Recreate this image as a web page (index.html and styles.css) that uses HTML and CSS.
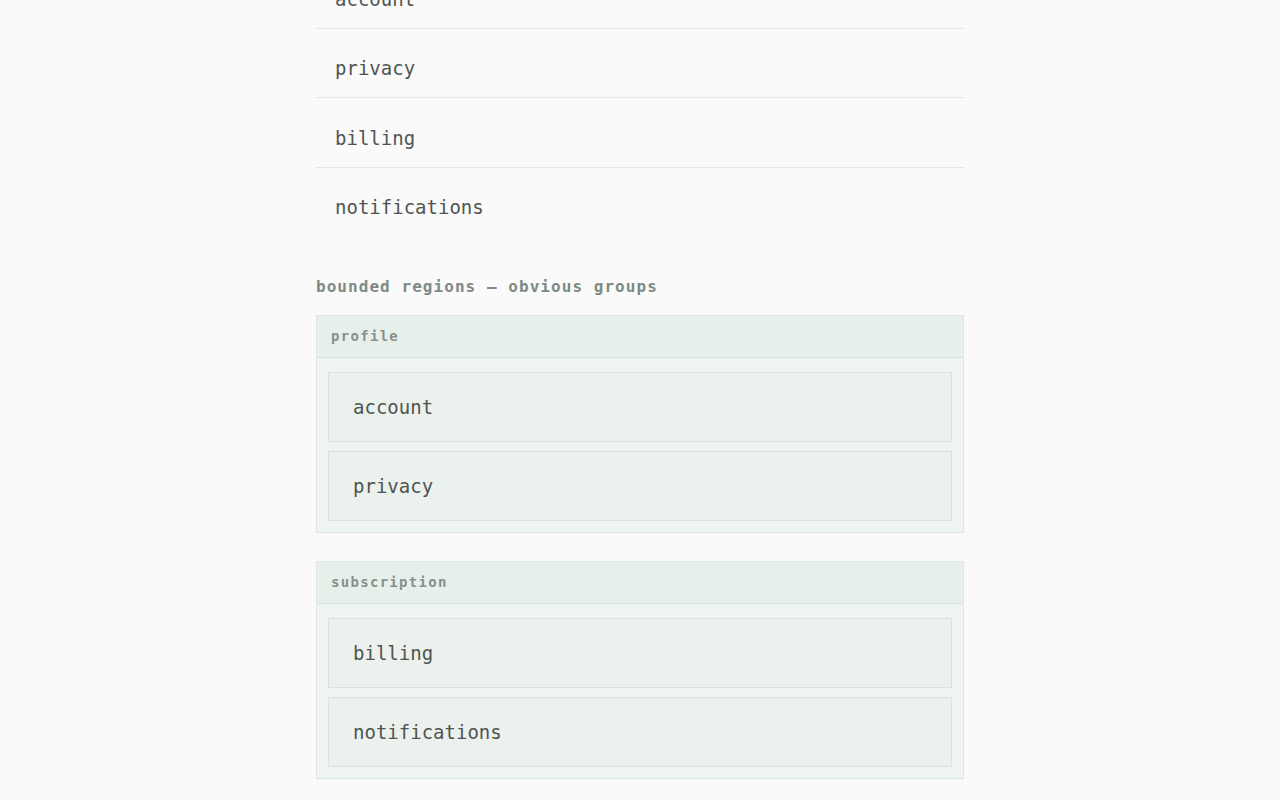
FILE: index.html
```html
<!DOCTYPE html>
<html lang="en">
<head>
<meta charset="utf-8">
<title>Grouping</title>
<link rel="stylesheet" href="styles.css">
</head>
<body>
<main class="page">
  <ul class="flat-list">
    <li class="flat-row">account</li>
    <li class="flat-row">privacy</li>
    <li class="flat-row">billing</li>
    <li class="flat-row">notifications</li>
  </ul>

  <h2 class="section-title">bounded regions — obvious groups</h2>

  <section class="group">
    <div class="group-head">profile</div>
    <div class="group-body">
      <div class="item">account</div>
      <div class="item">privacy</div>
    </div>
  </section>

  <section class="group">
    <div class="group-head">subscription</div>
    <div class="group-body">
      <div class="item">billing</div>
      <div class="item">notifications</div>
    </div>
  </section>
</main>
</body>
</html>
```

FILE: styles.css
```css
* { box-sizing: border-box; }

html, body {
  margin: 0;
  padding: 0;
  background: #f9faf9;
  font-family: "DejaVu Sans Mono", "Liberation Mono", monospace;
  color: #505553;
}

.page {
  width: 648px;
  margin: -41px auto 0;
  padding-bottom: 40px;
}

.flat-list {
  list-style: none;
  margin: 0;
  padding: 0;
}

.flat-row {
  font-size: 19px;
  line-height: 28px;
  padding: 25.5px 19px 15px;
  border-bottom: 1px solid #e6e8e7;
}

.flat-row:last-child {
  border-bottom: none;
}

.section-title {
  margin: 39px 0 16px;
  font-size: 16px;
  line-height: 24px;
  font-weight: bold;
  letter-spacing: 1.05px;
  color: #7f8a85;
}

.group {
  border: 1px solid #dde6e0;
  background: #eef4f0;
  margin-bottom: 28px;
}

.group-head {
  height: 41.5px;
  padding: 0 14px;
  display: flex;
  align-items: center;
  background: #e7efea;
  border-bottom: 1px solid #d9e3dd;
  font-size: 14px;
  font-weight: bold;
  letter-spacing: 1.3px;
  color: #86918c;
}

.group-body {
  padding: 14px 11px 11.5px;
  display: flex;
  flex-direction: column;
  gap: 9px;
}

.item {
  height: 70px;
  display: flex;
  align-items: center;
  padding: 0 24px;
  border: 1px solid #d9e2dc;
  background: #ebf1ed;
  font-size: 19px;
  color: #4f5452;
}
```
